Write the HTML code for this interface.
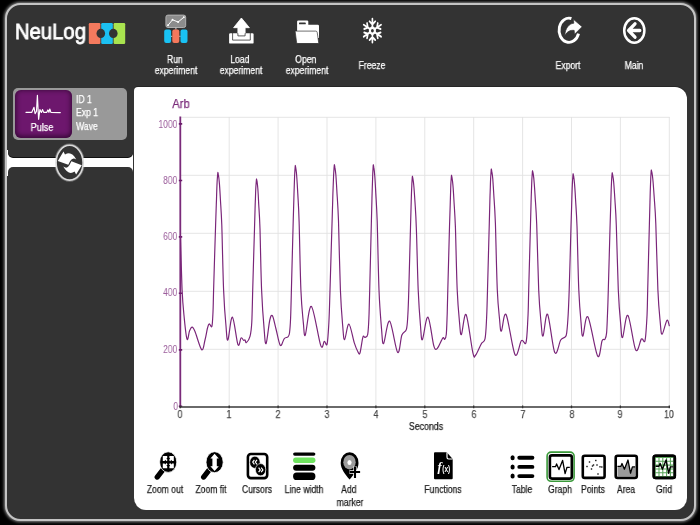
<!DOCTYPE html>
<html><head><meta charset="utf-8"><title>NeuLog</title>
<style>
html,body{margin:0;padding:0}
body{width:700px;height:525px;background:#000;position:relative;overflow:hidden;font-family:"Liberation Sans",sans-serif}
.abs{position:absolute}
.lbl{position:absolute;white-space:nowrap;text-align:center;will-change:transform}
svg{position:absolute;left:0;top:0;overflow:visible}
</style></head><body>
<div id="app" style="position:absolute;left:0;top:0;width:700px;height:525px;filter:blur(.4px)">

<div class="abs" style="left:4.8px;top:2.8px;width:687px;height:514.6px;border:2.2px solid #c4c4c4;border-radius:15.5px;background:#333;box-shadow:0 0 3px 1px rgba(255,255,255,.55)"></div>
<div class="abs" style="left:7px;top:150px;width:126px;height:26px;background:#fff"></div>
<div class="abs" style="left:8px;top:80px;width:125px;height:76.6px;background:#333;border-radius:0 0 5px 5px;box-shadow:0 1px 0 #111"></div>
<div class="abs" style="left:8px;top:167.3px;width:125px;height:340px;background:#333;border-radius:5px 5px 0 0"></div>
<div class="abs" style="left:134.1px;top:86.9px;width:552.9px;height:422.7px;background:#fff;border-radius:4px 12px 12px 12px;box-shadow:0 -1px 0 #262626"></div>
<div class="abs" style="left:13px;top:87.5px;width:114px;height:52px;background:#999;border-radius:5px"></div>
<div class="abs" style="left:14.5px;top:89.5px;width:57.5px;height:48px;background:#6d176d;border-radius:6px;box-shadow:inset 0 -1px 5px 1px rgba(30,0,30,.7)"></div>
<div class="lbl" style="left:42.2px;top:122.3px;color:#fff;font-size:10.4px;line-height:11px;transform:translateX(-50%) scaleX(0.87);-webkit-text-stroke:.25px #fff;">Pulse</div>
<div class="lbl" style="left:76px;top:92.5px;color:#fff;font-size:10px;line-height:13.3px;text-align:left;transform-origin:0 0;transform:scaleX(.86);-webkit-text-stroke:.25px #fff">ID 1<br>Exp 1<br>Wave</div>
<div class="lbl" style="left:15.4px;top:18.1px;color:#fff;font-size:21.6px;line-height:28px;transform-origin:0 0;transform:scaleX(.938);-webkit-text-stroke:.8px #fff">NeuLog</div>
<div class="lbl" style="left:175.6px;top:54px;color:#fff;font-size:10px;line-height:11px;transform:translateX(-50%) scaleX(0.86);-webkit-text-stroke:.25px #fff;">Run&nbsp;<br>experiment</div>
<div class="lbl" style="left:241px;top:54px;color:#fff;font-size:10px;line-height:11px;transform:translateX(-50%) scaleX(0.86);-webkit-text-stroke:.25px #fff;">Load&nbsp;<br>experiment</div>
<div class="lbl" style="left:307px;top:54px;color:#fff;font-size:10px;line-height:11px;transform:translateX(-50%) scaleX(0.86);-webkit-text-stroke:.25px #fff;">Open&nbsp;<br>experiment</div>
<div class="lbl" style="left:372px;top:59.5px;color:#fff;font-size:10px;line-height:11px;transform:translateX(-50%) scaleX(0.86);-webkit-text-stroke:.25px #fff;">Freeze</div>
<div class="lbl" style="left:568px;top:59.5px;color:#fff;font-size:10px;line-height:11px;transform:translateX(-50%) scaleX(0.86);-webkit-text-stroke:.25px #fff;">Export</div>
<div class="lbl" style="left:634px;top:59.5px;color:#fff;font-size:10px;line-height:11px;transform:translateX(-50%) scaleX(0.86);-webkit-text-stroke:.25px #fff;">Main</div>
<div class="lbl" style="left:165px;top:483.5px;color:#1c1c1c;font-size:10px;line-height:11px;transform:translateX(-50%) scaleX(0.86);-webkit-text-stroke:.25px #1c1c1c;">Zoom out</div>
<div class="lbl" style="left:211px;top:483.5px;color:#1c1c1c;font-size:10px;line-height:11px;transform:translateX(-50%) scaleX(0.86);-webkit-text-stroke:.25px #1c1c1c;">Zoom fit</div>
<div class="lbl" style="left:257px;top:483.5px;color:#1c1c1c;font-size:10px;line-height:11px;transform:translateX(-50%) scaleX(0.86);-webkit-text-stroke:.25px #1c1c1c;">Cursors</div>
<div class="lbl" style="left:304px;top:483.5px;color:#1c1c1c;font-size:10px;line-height:11px;transform:translateX(-50%) scaleX(0.86);-webkit-text-stroke:.25px #1c1c1c;">Line width</div>
<div class="lbl" style="left:443px;top:483.5px;color:#1c1c1c;font-size:10px;line-height:11px;transform:translateX(-50%) scaleX(0.86);-webkit-text-stroke:.25px #1c1c1c;">Functions</div>
<div class="lbl" style="left:522px;top:483.5px;color:#1c1c1c;font-size:10px;line-height:11px;transform:translateX(-50%) scaleX(0.86);-webkit-text-stroke:.25px #1c1c1c;">Table</div>
<div class="lbl" style="left:560px;top:483.5px;color:#1c1c1c;font-size:10px;line-height:11px;transform:translateX(-50%) scaleX(0.86);-webkit-text-stroke:.25px #1c1c1c;">Graph</div>
<div class="lbl" style="left:593.3px;top:483.5px;color:#1c1c1c;font-size:10px;line-height:11px;transform:translateX(-50%) scaleX(0.86);-webkit-text-stroke:.25px #1c1c1c;">Points</div>
<div class="lbl" style="left:626px;top:483.5px;color:#1c1c1c;font-size:10px;line-height:11px;transform:translateX(-50%) scaleX(0.86);-webkit-text-stroke:.25px #1c1c1c;">Area</div>
<div class="lbl" style="left:664px;top:483.5px;color:#1c1c1c;font-size:10px;line-height:11px;transform:translateX(-50%) scaleX(0.86);-webkit-text-stroke:.25px #1c1c1c;">Grid</div>
<div class="lbl" style="left:350px;top:483.5px;color:#1c1c1c;font-size:10px;line-height:12.7px;transform:translateX(-50%) scaleX(0.86);-webkit-text-stroke:.25px #1c1c1c;">Add&nbsp;<br>marker</div>
<div class="lbl" style="left:181px;top:96.5px;color:#7a2a7a;font-size:12.5px;line-height:14px;transform:translateX(-50%) scaleX(0.9);-webkit-text-stroke:.25px #7a2a7a;">Arb</div>
<div class="lbl" style="right:522.2px;top:117.85px;color:#9c5e9c;font-size:11px;line-height:13px;text-align:right;transform-origin:100% 50%;transform:scaleX(.78)">1000</div>
<div class="lbl" style="right:522.2px;top:173.95px;color:#9c5e9c;font-size:11px;line-height:13px;text-align:right;transform-origin:100% 50%;transform:scaleX(.78)">800</div>
<div class="lbl" style="right:522.2px;top:229.55px;color:#9c5e9c;font-size:11px;line-height:13px;text-align:right;transform-origin:100% 50%;transform:scaleX(.78)">600</div>
<div class="lbl" style="right:522.2px;top:286.05px;color:#9c5e9c;font-size:11px;line-height:13px;text-align:right;transform-origin:100% 50%;transform:scaleX(.78)">400</div>
<div class="lbl" style="right:522.2px;top:342.85px;color:#9c5e9c;font-size:11px;line-height:13px;text-align:right;transform-origin:100% 50%;transform:scaleX(.78)">200</div>
<div class="lbl" style="right:522.2px;top:399.55px;color:#9c5e9c;font-size:11px;line-height:13px;text-align:right;transform-origin:100% 50%;transform:scaleX(.78)">0</div>
<div class="lbl" style="left:180.3px;top:407.5px;color:#444;font-size:11px;line-height:13px;transform:translateX(-50%) scaleX(0.8);-webkit-text-stroke:.25px #444;">0</div>
<div class="lbl" style="left:229.20000000000002px;top:407.5px;color:#444;font-size:11px;line-height:13px;transform:translateX(-50%) scaleX(0.8);-webkit-text-stroke:.25px #444;">1</div>
<div class="lbl" style="left:278.1px;top:407.5px;color:#444;font-size:11px;line-height:13px;transform:translateX(-50%) scaleX(0.8);-webkit-text-stroke:.25px #444;">2</div>
<div class="lbl" style="left:327.0px;top:407.5px;color:#444;font-size:11px;line-height:13px;transform:translateX(-50%) scaleX(0.8);-webkit-text-stroke:.25px #444;">3</div>
<div class="lbl" style="left:375.9px;top:407.5px;color:#444;font-size:11px;line-height:13px;transform:translateX(-50%) scaleX(0.8);-webkit-text-stroke:.25px #444;">4</div>
<div class="lbl" style="left:424.8px;top:407.5px;color:#444;font-size:11px;line-height:13px;transform:translateX(-50%) scaleX(0.8);-webkit-text-stroke:.25px #444;">5</div>
<div class="lbl" style="left:473.7px;top:407.5px;color:#444;font-size:11px;line-height:13px;transform:translateX(-50%) scaleX(0.8);-webkit-text-stroke:.25px #444;">6</div>
<div class="lbl" style="left:522.6px;top:407.5px;color:#444;font-size:11px;line-height:13px;transform:translateX(-50%) scaleX(0.8);-webkit-text-stroke:.25px #444;">7</div>
<div class="lbl" style="left:571.5px;top:407.5px;color:#444;font-size:11px;line-height:13px;transform:translateX(-50%) scaleX(0.8);-webkit-text-stroke:.25px #444;">8</div>
<div class="lbl" style="left:620.4px;top:407.5px;color:#444;font-size:11px;line-height:13px;transform:translateX(-50%) scaleX(0.8);-webkit-text-stroke:.25px #444;">9</div>
<div class="lbl" style="left:669.3px;top:407.5px;color:#444;font-size:11px;line-height:13px;transform:translateX(-50%) scaleX(0.8);-webkit-text-stroke:.25px #444;">10</div>
<div class="lbl" style="left:425.7px;top:420.8px;color:#222;font-size:10px;line-height:12px;transform:translateX(-50%) scaleX(0.88);-webkit-text-stroke:.25px #222;">Seconds</div>
<svg width="700" height="525" viewBox="0 0 700 525">
<path d="M229.2 117V407M278.1 117V407M327.0 117V407M375.9 117V407M424.8 117V407M473.7 117V407M522.6 117V407M571.5 117V407M620.4 117V407M669.3 117V407M181 117.3H669.5M181 175.3H669.5M181 233.3H669.5M181 291.3H669.5M181 349.3H669.5" stroke="#e2e2e2" stroke-width=".9" fill="none"/>
<path d="M180.3 116.5V407.5" stroke="#7a2a7a" stroke-width="1.8"/>
<path d="M178.8 123.9h3.4M178.8 180.5h3.4M178.8 236.9h3.4M178.8 293.2h3.4M178.8 349.9h3.4M178.8 406.3h3.4" stroke="#6a1a6a" stroke-width="1.6"/>
<path d="M179.5 407H670" stroke="#383838" stroke-width="1.5"/>
<path d="M180.3 405.6v2.6M229.2 405.6v2.6M278.1 405.6v2.6M327.0 405.6v2.6M375.9 405.6v2.6M424.8 405.6v2.6M473.7 405.6v2.6M522.6 405.6v2.6M571.5 405.6v2.6M620.4 405.6v2.6M669.3 405.6v2.6" stroke="#333" stroke-width="1.3"/>
<path d="M180.5 236.0C180.8 245.0 181.5 276.2 182.1 290.0C182.7 303.8 183.5 310.4 184.3 318.6C185.1 326.8 186.2 337.2 187.1 339.3C188.0 341.4 188.7 333.0 189.5 331.0C190.3 329.0 191.2 327.0 192.1 327.1C193.0 327.2 193.4 327.7 195.0 331.5C196.6 335.3 200.0 348.3 201.7 349.7C203.4 351.1 204.0 343.6 205.0 340.0C206.0 336.4 206.8 330.7 207.5 328.0C208.2 325.3 208.6 324.2 209.3 323.9C210.0 323.6 211.3 328.4 211.9 326.4C212.5 324.4 212.7 318.1 213.0 312.0C213.3 305.9 213.2 304.5 213.6 290.0C214.0 275.5 215.1 240.3 215.6 225.2C216.1 210.1 216.2 206.5 216.5 199.3C216.7 192.2 216.9 186.4 217.1 182.4C217.3 178.3 217.5 176.6 217.6 174.9C217.8 173.2 217.8 172.4 217.9 172.4C218.0 172.4 218.2 173.2 218.4 174.9C218.7 176.6 219.0 178.3 219.3 182.4C219.7 186.4 220.0 192.2 220.4 199.3C220.8 206.5 221.2 210.1 221.8 225.2C222.3 240.3 222.9 273.2 223.6 290.0C224.3 306.8 225.2 317.7 226.0 326.0C226.7 334.3 226.8 341.5 227.9 340.0C229.0 338.5 230.7 316.3 232.4 317.1C234.1 317.9 236.5 341.1 237.9 344.6C239.3 348.1 240.2 338.6 241.1 337.9C242.0 337.2 242.9 339.9 243.6 340.3C244.2 340.7 244.5 339.6 245.0 340.0C245.5 340.4 245.6 343.2 246.4 342.6C247.2 342.0 249.1 339.8 250.0 336.4C250.9 333.0 251.4 329.7 251.8 322.0C252.2 314.3 252.3 305.5 252.7 290.0C253.1 274.5 254.1 243.0 254.5 228.7C254.9 214.5 255.0 211.0 255.2 204.2C255.5 197.5 255.6 192.1 255.8 188.2C256.0 184.4 256.2 182.7 256.3 181.2C256.4 179.6 256.4 178.8 256.5 178.8C256.6 178.8 256.7 179.6 257.0 181.2C257.2 182.7 257.5 184.4 257.8 188.2C258.1 192.1 258.4 197.5 258.7 204.2C259.1 211.0 259.5 214.5 260.0 228.7C260.4 243.0 260.9 273.4 261.6 290.0C262.3 306.6 263.3 319.7 264.1 328.6C264.8 337.5 265.1 345.0 266.1 343.6C267.1 342.2 268.7 324.6 269.8 320.0C270.9 315.4 271.5 314.4 272.5 315.9C273.5 317.4 274.7 324.1 276.0 329.0C277.3 333.9 278.9 343.8 280.3 345.4C281.7 347.0 283.0 340.0 284.3 338.6C285.6 337.2 287.0 337.8 287.9 336.9C288.8 336.0 289.1 336.1 289.5 333.0C289.9 329.9 290.3 325.2 290.6 318.0C290.9 310.8 291.0 306.1 291.4 290.0C291.8 273.9 292.8 237.4 293.2 221.4C293.7 205.3 293.8 201.5 294.0 193.9C294.2 186.3 294.4 180.3 294.6 176.0C294.8 171.6 294.9 169.8 295.1 168.0C295.2 166.3 295.2 165.4 295.3 165.4C295.4 165.4 295.6 166.3 295.8 168.0C296.0 169.8 296.4 171.6 296.7 176.0C297.0 180.3 297.4 186.3 297.8 193.9C298.2 201.5 298.6 205.3 299.1 221.4C299.6 237.4 300.2 273.2 300.9 290.0C301.6 306.8 302.6 314.9 303.3 322.4C304.1 329.9 304.0 337.7 305.3 335.0C306.6 332.3 308.8 304.7 311.4 306.4C314.0 308.1 318.5 339.6 320.7 345.4C322.9 351.2 323.2 341.6 324.3 341.4C325.4 341.2 326.3 347.2 327.1 344.0C327.9 340.8 328.4 331.0 328.9 322.0C329.4 313.0 329.5 306.8 330.0 290.0C330.5 273.2 331.6 237.1 332.1 221.0C332.6 204.9 332.7 201.0 332.9 193.4C333.2 185.8 333.4 179.7 333.6 175.3C333.8 171.0 334.0 169.1 334.1 167.4C334.3 165.6 334.3 164.7 334.4 164.7C334.5 164.7 334.7 165.6 334.9 167.4C335.2 169.1 335.5 171.0 335.9 175.3C336.2 179.7 336.6 185.8 337.0 193.4C337.5 201.0 337.9 204.9 338.5 221.0C339.0 237.1 339.7 272.5 340.4 290.0C341.1 307.5 342.0 317.5 342.7 325.8C343.4 334.1 343.6 340.0 344.6 339.7C345.6 339.4 347.3 323.5 348.9 324.0C350.5 324.5 352.8 338.3 354.3 342.9C355.8 347.5 356.9 350.0 357.9 351.7C358.8 353.4 359.2 355.3 360.0 352.9C360.8 350.5 362.1 339.7 362.9 337.1C363.7 334.5 364.2 337.9 365.0 337.4C365.8 336.9 367.1 337.5 367.7 334.3C368.3 331.1 368.6 325.4 368.9 318.0C369.2 310.6 369.3 306.2 369.7 290.0C370.1 273.8 371.0 237.1 371.4 221.0C371.8 204.9 371.9 201.0 372.1 193.4C372.3 185.8 372.5 179.7 372.7 175.3C372.8 171.0 373.0 169.1 373.1 167.4C373.2 165.6 373.2 164.7 373.3 164.7C373.4 164.7 373.6 165.6 373.8 167.4C374.1 169.1 374.4 171.0 374.7 175.3C375.1 179.7 375.4 185.8 375.8 193.4C376.2 201.0 376.6 204.9 377.2 221.0C377.7 237.1 378.3 272.1 379.0 290.0C379.7 307.9 380.8 319.7 381.5 328.6C382.3 337.5 382.3 344.8 383.6 343.6C384.9 342.4 387.3 319.6 389.6 321.1C391.9 322.6 395.6 350.1 397.6 352.4C399.7 354.7 400.4 338.9 401.9 335.0C403.4 331.1 405.4 332.8 406.4 329.3C407.4 325.8 407.5 320.6 407.9 314.0C408.3 307.4 408.4 304.4 408.8 290.0C409.2 275.6 410.1 241.9 410.5 227.3C410.9 212.7 411.0 209.2 411.2 202.2C411.4 195.3 411.6 189.8 411.8 185.8C411.9 181.9 412.1 180.2 412.2 178.6C412.3 177.0 412.3 176.2 412.4 176.2C412.5 176.2 412.7 177.0 412.9 178.6C413.2 180.2 413.5 181.9 413.8 185.8C414.2 189.8 414.5 195.3 415.0 202.2C415.4 209.2 415.8 212.7 416.3 227.3C416.9 241.9 417.5 273.6 418.2 290.0C418.9 306.4 419.8 317.5 420.5 325.8C421.2 334.1 421.2 341.1 422.4 339.7C423.6 338.3 426.0 316.2 427.9 317.1C429.8 318.0 432.2 339.6 433.6 345.0C435.0 350.4 435.3 349.1 436.1 349.3C436.9 349.5 437.5 348.3 438.6 346.4C439.7 344.5 441.9 339.1 442.9 337.9C443.9 336.7 444.1 339.9 444.7 339.3C445.3 338.7 445.9 338.5 446.3 334.3C446.7 330.1 446.9 321.4 447.2 314.0C447.4 306.6 447.4 304.5 447.8 290.0C448.2 275.5 449.1 241.5 449.5 226.8C450.0 212.0 450.1 208.4 450.3 201.5C450.5 194.5 450.7 188.9 450.8 184.9C451.0 181.0 451.2 179.3 451.3 177.6C451.4 176.0 451.4 175.2 451.5 175.2C451.6 175.2 451.8 176.0 452.0 177.6C452.3 179.3 452.6 181.0 452.9 184.9C453.3 188.9 453.6 194.5 454.0 201.5C454.4 208.4 454.8 212.0 455.4 226.8C455.9 241.5 456.5 274.1 457.2 290.0C457.9 305.9 458.8 314.7 459.5 322.1C460.2 329.5 460.3 335.9 461.4 334.6C462.5 333.3 464.2 311.6 466.1 314.6C468.0 317.7 471.3 346.2 472.9 352.9C474.5 359.6 474.3 356.6 475.7 355.0C477.1 353.4 479.8 346.3 481.4 343.6C482.9 340.9 484.1 343.2 485.0 338.9C485.9 334.6 486.2 326.1 486.6 318.0C487.0 309.9 487.1 305.8 487.5 290.0C487.9 274.2 488.9 238.8 489.3 223.2C489.7 207.7 489.8 203.9 490.0 196.5C490.3 189.2 490.4 183.3 490.6 179.1C490.8 174.9 491.0 173.1 491.1 171.4C491.2 169.7 491.2 168.8 491.3 168.8C491.4 168.8 491.6 169.7 491.8 171.4C492.1 173.1 492.5 174.9 492.8 179.1C493.1 183.3 493.5 189.2 493.9 196.5C494.4 203.9 494.8 207.7 495.4 223.2C495.9 238.8 496.6 273.9 497.3 290.0C498.0 306.1 498.9 312.7 499.6 319.6C500.2 326.4 500.3 331.9 501.4 331.1C502.5 330.3 503.8 310.7 506.1 314.6C508.4 318.5 512.5 350.2 515.0 354.6C517.5 359.0 519.6 342.7 521.4 340.7C523.2 338.7 524.9 346.4 526.0 342.6C527.1 338.8 527.4 326.8 527.9 318.0C528.4 309.2 528.3 305.6 528.7 290.0C529.1 274.4 530.1 239.6 530.5 224.2C530.9 208.9 531.0 205.2 531.2 197.9C531.5 190.7 531.6 184.9 531.8 180.7C532.0 176.6 532.2 174.8 532.3 173.1C532.4 171.4 532.4 170.6 532.5 170.6C532.6 170.6 532.8 171.4 533.1 173.1C533.3 174.8 533.7 176.6 534.0 180.7C534.4 184.9 534.8 190.7 535.2 197.9C535.7 205.2 536.1 208.9 536.7 224.2C537.3 239.6 538.0 273.5 538.7 290.0C539.4 306.5 540.4 315.5 541.1 323.1C541.9 330.8 542.0 337.5 543.1 336.0C544.2 334.5 545.7 311.5 547.6 314.3C549.5 317.1 552.6 348.3 554.8 352.6C557.0 356.9 559.0 342.6 560.7 340.0C562.4 337.4 564.0 338.3 565.0 337.1C566.0 335.9 566.2 336.8 566.7 332.9C567.2 329.0 567.8 321.1 568.2 314.0C568.6 306.9 568.7 304.7 569.2 290.0C569.7 275.3 570.6 240.9 571.0 225.9C571.5 211.0 571.6 207.4 571.8 200.3C572.0 193.2 572.2 187.6 572.4 183.6C572.6 179.5 572.7 177.8 572.9 176.2C573.0 174.5 573.0 173.7 573.1 173.7C573.2 173.7 573.4 174.5 573.6 176.2C573.9 177.8 574.2 179.5 574.5 183.6C574.9 187.6 575.2 193.2 575.6 200.3C576.0 207.4 576.4 211.0 577.0 225.9C577.5 240.9 578.1 273.8 578.8 290.0C579.5 306.2 580.4 315.5 581.1 323.1C581.7 330.8 581.8 337.0 582.9 336.0C584.0 335.0 585.4 313.6 587.9 316.9C590.4 320.2 595.2 352.0 597.6 356.0C600.0 360.0 600.9 343.5 602.1 340.7C603.3 337.9 604.2 340.6 605.0 339.3C605.8 338.0 606.2 337.1 606.6 332.9C607.0 328.7 607.2 321.1 607.5 314.0C607.8 306.9 607.9 304.8 608.3 290.0C608.7 275.2 609.7 240.4 610.1 225.3C610.6 210.2 610.7 206.6 610.9 199.5C611.1 192.3 611.3 186.6 611.5 182.5C611.7 178.5 611.8 176.7 612.0 175.1C612.1 173.4 612.1 172.6 612.2 172.6C612.3 172.6 612.5 173.4 612.7 175.1C613.0 176.7 613.4 178.5 613.7 182.5C614.1 186.6 614.4 192.3 614.9 199.5C615.3 206.6 615.8 210.2 616.3 225.3C616.9 240.4 617.6 273.5 618.3 290.0C619.0 306.5 619.9 316.2 620.7 324.1C621.4 332.0 621.4 338.9 622.6 337.4C623.8 335.9 625.7 313.3 627.9 315.4C630.1 317.5 633.5 346.1 635.7 350.0C638.0 353.9 639.9 340.6 641.4 339.0C642.9 337.4 644.1 344.2 645.0 340.7C645.9 337.2 646.4 326.4 646.9 318.0C647.4 309.6 647.3 305.7 647.7 290.0C648.1 274.3 649.0 239.2 649.4 223.8C649.8 208.3 649.9 204.6 650.1 197.3C650.3 190.0 650.5 184.1 650.7 180.0C650.8 175.8 651.0 174.0 651.1 172.3C651.2 170.6 651.2 169.8 651.3 169.8C651.4 169.8 651.6 170.6 651.9 172.3C652.2 174.0 652.6 175.8 652.9 180.0C653.3 184.1 653.7 190.0 654.2 197.3C654.7 204.6 655.2 208.3 655.8 223.8C656.4 239.2 657.2 273.6 657.9 290.0C658.6 306.4 659.5 314.5 660.2 321.9C660.9 329.3 661.0 334.6 662.1 334.3C663.2 334.0 665.7 321.7 666.9 320.3C668.1 318.9 668.9 324.8 669.3 325.7" stroke="#7a2579" stroke-width="1.18" fill="none" stroke-linejoin="round" stroke-linecap="round"/>
<rect x="88.8" y="23" width="11.6" height="20.9" rx="1.2" fill="#f47a5e"/>
<rect x="101.2" y="23" width="11.6" height="20.9" rx="1.2" fill="#1cc0f2"/>
<rect x="113.6" y="23" width="11.6" height="20.9" rx="1.2" fill="#a9e44f"/>
<ellipse cx="100.8" cy="33.4" rx="4.3" ry="4.6" fill="#333"/><ellipse cx="113.3" cy="33.4" rx="4.3" ry="4.6" fill="#333"/>
<path d="M26 112.4H31.7L34 107.3L35.1 113.6L36.5 111.3L37.4 95.3L38.6 119.3L39.9 109.6L41.4 112.4L42.6 109.6L43.7 112.4H46.6L47.9 109.9L48.9 112.4L49.8 109L50.9 112.4L60.3 112.6" stroke="#fff" stroke-width="1.15" fill="none" stroke-linejoin="round" stroke-linecap="round"/>
<ellipse cx="69.6" cy="162.7" rx="13.6" ry="17.5" fill="#333" stroke="#fff" stroke-opacity=".3" stroke-width="3.2"/>
<ellipse cx="69.6" cy="162.7" rx="13.5" ry="17.4" fill="#333" stroke="#d8d8d8" stroke-width="1.6"/>
<path d="M57.8 160.9L63.5 151.5L65.0 154.6Q71.2 150.1 76.3 159.5Q72.6 156.7 70.2 161.1L68.3 164.8Z" fill="#fff"/>
<path d="M81.8 165.2L76.1 174.6L74.6 171.5Q68.5 175.9 63.3 166.5Q67.1 169.4 69.5 165.0L71.4 161.3Z" fill="#fff"/>
<rect x="165.9" y="15.1" width="19.8" height="12.4" rx="2" fill="#8c8c8c" stroke="#b8b8b8" stroke-width=".9"/>
<path d="M168 25.3L172.5 19.8L178.1 22L183.8 17.3" stroke="#fff" stroke-width="1" fill="none"/>
<path d="M168 25.3h.01M172.5 19.8h.01M178.1 22h.01M183.8 17.3h.01" stroke="#fff" stroke-width="1.9" stroke-linecap="round"/>
<path d="M175.9 27.8V29.6M171 36.3h1.4M179.2 36.3h1.4" stroke="#e8e8e8" stroke-width=".9"/>
<rect x="164.2" y="29.4" width="6.9" height="13.5" rx="2" fill="#19c2f4"/><rect x="172.3" y="29.4" width="7" height="13.5" rx="2" fill="#f4785c"/><rect x="180.5" y="29.4" width="7" height="13.5" rx="2" fill="#19c2f4"/>
<rect x="229.1" y="33.3" width="24.5" height="10.3" rx="1.2" fill="#fff"/>
<path d="M232.6 33V40.1H250.3V33" stroke="#333" stroke-width=".8" fill="none"/>
<path d="M241.4 18L249.4 27.7H245.1V35.9H237.9V27.7H233.6Z" fill="#fff" stroke="#333" stroke-width=".8" stroke-linejoin="round"/>
<path d="M241.4 18L249.4 27.7H245.1V33H237.9V27.7H233.6Z" fill="#fff" stroke="#fff" stroke-width=".8" stroke-linejoin="round"/>
<path d="M297.1 21.6Q297.1 20.4 298.3 20.4H307.1Q308.3 20.4 308.3 21.6V24.7H317.8Q319 24.7 319 25.9V38H297.1Z" fill="#fff"/>
<rect x="299" y="22.6" width="6.8" height="1.7" rx=".6" fill="#333"/>
<path d="M295.1 31.1H315.6Q317 31.1 317.2 32.3L318.8 43.6H298Q296.8 43.6 296.6 42.4Z" fill="#fff" stroke="#333" stroke-width=".7" stroke-linejoin="round"/>
<path d="M297.3 43.9H318.5" stroke="#333" stroke-width="1"/>
<g transform="translate(372.4 30.7) scale(.84 1)"><path d="M0.00 -3.00L0.00 -11.90M0.00 -6.20L3.36 -9.34M0.00 -6.20L-3.36 -9.34M-2.60 -1.50L-10.31 -5.95M-5.37 -3.10L-6.40 -7.58M-5.37 -3.10L-9.77 -1.76M-2.60 1.50L-10.31 5.95M-5.37 3.10L-9.77 1.76M-5.37 3.10L-6.40 7.58M-0.00 3.00L-0.00 11.90M-0.00 6.20L-3.36 9.34M-0.00 6.20L3.36 9.34M2.60 1.50L10.31 5.95M5.37 3.10L6.40 7.58M5.37 3.10L9.77 1.76M2.60 -1.50L10.31 -5.95M5.37 -3.10L9.77 -1.76M5.37 -3.10L6.40 -7.58" stroke="#fff" stroke-width="2" stroke-linecap="round" fill="none"/><polygon points="4.16,-2.40 0.00,-4.80 -4.16,-2.40 -4.16,2.40 -0.00,4.80 4.16,2.40" fill="#fff"/><circle r="1.7" fill="#333"/></g>
<path d="M578.5 33.6A9.9 12.1 0 1 1 571.4 18.5" stroke="#fff" stroke-width="2.9" fill="none"/>
<path d="M564.8 35.4C565.2 28.5 568.8 23.6 573.8 23.2L573.4 19.3L582.1 26.7L574.5 34.3L574.2 30.4C570.2 29.9 567.2 31.6 564.8 35.4Z" fill="#fff" stroke="#333" stroke-width=".7" stroke-linejoin="round"/>
<ellipse cx="634.3" cy="30.5" rx="10.1" ry="12.2" fill="none" stroke="#fff" stroke-width="2.5"/>
<path d="M635 23.8L628.6 30.5L635 37.2M629 30.5H639.8" stroke="#fff" stroke-width="3.3" stroke-linecap="round" stroke-linejoin="round" fill="none"/>
<path d="M163.2 469.3L157.2 477.1" stroke="#000" stroke-width="5.2" stroke-linecap="round"/>
<ellipse cx="168.2" cy="462.1" rx="8.6" ry="10.3" fill="#000" stroke="#fff" stroke-width=".8"/>
<path d="M0 0H4.4V2L3.6 2.6L4.8 4L3.6 5.2L2.4 3.8L1.8 4.9H0Z" fill="#fff" transform="translate(162.8 456) scale(1 1)"/>
<path d="M0 0H4.4V2L3.6 2.6L4.8 4L3.6 5.2L2.4 3.8L1.8 4.9H0Z" fill="#fff" transform="translate(173.8 456) scale(-1 1)"/>
<path d="M0 0H4.4V2L3.6 2.6L4.8 4L3.6 5.2L2.4 3.8L1.8 4.9H0Z" fill="#fff" transform="translate(162.8 468.3) scale(1 -1)"/>
<path d="M0 0H4.4V2L3.6 2.6L4.8 4L3.6 5.2L2.4 3.8L1.8 4.9H0Z" fill="#fff" transform="translate(173.8 468.3) scale(-1 -1)"/>
<path d="M209.6 469.3L203.6 477.1" stroke="#000" stroke-width="5.2" stroke-linecap="round"/>
<ellipse cx="214.6" cy="462.2" rx="8.6" ry="10.5" fill="#000" stroke="#fff" stroke-width=".8"/>
<path d="M214.6 453.7L218.8 458.5H216.8V466.3H218.8L214.6 471.1L210.4 466.3H212.4V458.5H210.4Z" fill="#fff"/>
<rect x="247.9" y="454" width="19.3" height="24.1" rx="3" fill="#fff" stroke="#000" stroke-width="2.6"/>
<ellipse cx="254.9" cy="462.3" rx="5.2" ry="6.1" fill="#000" stroke="#fff" stroke-width=".6"/>
<ellipse cx="260.6" cy="469.7" rx="5.2" ry="6.1" fill="#000" stroke="#fff" stroke-width=".6"/>
<path d="M254.4 459.8L252.7 462.1L254.4 464.4M257 459.8L255.3 462.1L257 464.4M258.6 467.6L260.3 469.9L258.6 472.2M261.2 467.6L262.9 469.9L261.2 472.2" stroke="#fff" stroke-width="1.15" fill="none"/>
<rect x="293.1" y="452.4" width="22.3" height="3.4" rx="1.7" fill="#000"/>
<rect x="293.1" y="457.6" width="22.3" height="5.3" rx="2.6" fill="#6fe35f"/>
<rect x="293.1" y="464.7" width="22.3" height="6.1" rx="3" fill="#000"/>
<rect x="293.1" y="472.4" width="22.3" height="7.6" rx="3.6" fill="#000"/>
<path d="M349.6 479.4C345.5 474.5 340.7 468.8 340.7 462.9A8.9 10.7 0 1 1 358.5 462.9C358.5 468.8 353.7 474.5 349.6 479.4Z" fill="#000"/>
<ellipse cx="349.5" cy="462.2" rx="6.2" ry="7.2" fill="#9c9c9c"/><ellipse cx="349.5" cy="462.4" rx="2.1" ry="2.5" fill="#fff"/>
<path d="M349.4 472H360.3M355 466.2V478.3" stroke="#fff" stroke-width="3.3"/>
<path d="M349.6 472H360.1M355 466.4V478.1" stroke="#000" stroke-width="2.1"/>
<path d="M434 453.3Q434 452.3 435 452.3H446.8L452.7 459.1V478.3Q452.7 479.3 451.7 479.3H435Q434 479.3 434 478.3Z" fill="#000"/>
<path d="M447 452.3V457.3Q447 459 448.6 459H452.7" stroke="#fff" stroke-width="1.2" fill="none"/>
<text x="437.4" y="471.3" fill="#fff" font-family="Liberation Serif" font-style="italic" font-weight="bold" font-size="12.5">f</text>
<text x="0" y="0" fill="#fff" font-family="Liberation Sans" font-size="8.2" font-weight="bold" transform="translate(442.3 471.7) scale(.8 1)">(x)</text>
<ellipse cx="512.6" cy="457.8" rx="2.1" ry="2.5" fill="#000"/><path d="M519.3 457.8H532.4" stroke="#000" stroke-width="3.9" stroke-linecap="round"/>
<ellipse cx="512.6" cy="466.9" rx="2.1" ry="2.5" fill="#000"/><path d="M519.3 466.9H532.4" stroke="#000" stroke-width="3.9" stroke-linecap="round"/>
<ellipse cx="512.6" cy="476.1" rx="2.1" ry="2.5" fill="#000"/><path d="M519.3 476.1H532.4" stroke="#000" stroke-width="3.9" stroke-linecap="round"/>
<rect x="547.1" y="452.1" width="27" height="29.2" rx="4" fill="#fff" stroke="#3a9a3a" stroke-width="1.6"/>
<rect x="549.9" y="455.4" width="21.9" height="23.2" rx="2" fill="#fff" stroke="#000" stroke-width="2.6"/>
<path d="M552.1 466.7L555.5 466.7L556.6 463.9L559.0 469.6L562.6 460.4L565.1 473.6L567.0 467.3L569.8 467.3" stroke="#000" stroke-width="1.3" fill="none" stroke-linejoin="round"/>
<rect x="582.8" y="455.7" width="21.8" height="22.2" rx="2" fill="#fff" stroke="#000" stroke-width="2.6"/>
<rect x="586.3" y="465.8" width="1.4" height="1.4" fill="#111"/><rect x="588.8" y="461.3" width="1.4" height="1.4" fill="#111"/><rect x="590.8" y="468.3" width="1.4" height="1.4" fill="#111"/><rect x="592.8" y="464.3" width="1.4" height="1.4" fill="#111"/><rect x="595.0999999999999" y="459.8" width="1.4" height="1.4" fill="#111"/><rect x="597.3" y="473.3" width="1.4" height="1.4" fill="#111"/><rect x="599.3" y="466.1" width="1.4" height="1.4" fill="#111"/><rect x="601.0999999999999" y="466.3" width="1.4" height="1.4" fill="#111"/><rect x="591.8" y="465.3" width="1.4" height="1.4" fill="#111"/><rect x="596.3" y="464.3" width="1.4" height="1.4" fill="#111"/>
<rect x="615.7" y="455.7" width="21.1" height="22.2" rx="2" fill="#fff" stroke="#000" stroke-width="2.6"/>
<path d="M617.5 466.3L620.9 466.3L622.0 463.5L624.4 469.2L628.0 460.0L630.5 473.2L632.4 466.9L635.1 466.9V476.3H617.45Z" fill="#9a9a9a"/>
<path d="M617.5 466.3L620.9 466.3L622.0 463.5L624.4 469.2L628.0 460.0L630.5 473.2L632.4 466.9L635.1 466.9" stroke="#000" stroke-width="1.3" fill="none" stroke-linejoin="round"/>
<rect x="653.8" y="455.7" width="21" height="22.2" rx="2" fill="#fff" stroke="#000" stroke-width="2.6"/>
<path d="M655.2 457V476.6M659.0 457V476.6M662.8 457V476.6M666.6 457V476.6M670.4 457V476.6M674.2 457V476.6M655 457.4H673.8M655 461.2H673.8M655 465.1H673.8M655 468.9H673.8M655 472.8H673.8M655 476.6H673.8" stroke="#5aa45a" stroke-width="1.05"/>
<rect x="653.8" y="455.7" width="21" height="22.2" rx="2" fill="none" stroke="#000" stroke-width="2.6"/>
<path d="M655.5 466.3L658.9 466.3L660.1 463.5L662.4 469.2L666.1 460.0L668.6 473.2L670.4 466.9L673.2 466.9" stroke="#000" stroke-width="1.4" fill="none" stroke-linejoin="round"/>
</svg>
</div></body></html>
